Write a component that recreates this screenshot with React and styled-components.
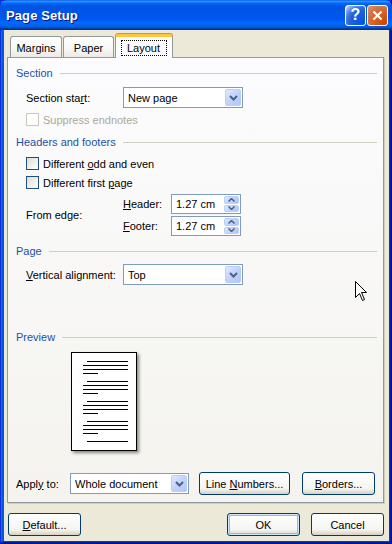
import React from 'react';
import styled, { createGlobalStyle } from 'styled-components';

const GlobalStyle = createGlobalStyle`
  html, body {
    margin: 0;
    padding: 0;
    background: #ECE9D8;
  }
  body {
    font-family: "Liberation Sans", Arial, sans-serif;
    font-size: 11px;
    color: #000;
  }
`;

const Window = styled.div`
  width: 392px;
  height: 544px;
  box-sizing: border-box;
  display: flex;
  flex-direction: column;
  background: #0855dd;
  box-shadow: inset -1px -1px #00138c, inset 1px 1px #0831d9, inset -2px -2px #001ea0,
    inset 2px 2px #166aee, inset -3px -3px #003bda, inset 3px 3px #0855dd;
  padding: 0 3px 3px 4px;
`;

const TitleBar = styled.div`
  height: 30px;
  margin: 0 -3px 0 -4px;
  padding: 0 4px 0 6px;
  display: flex;
  align-items: center;
  background: linear-gradient(
    to bottom,
    #0058ee 0%,
    #3593ff 4%,
    #288eff 6%,
    #127dff 8%,
    #036ffc 10%,
    #0262ee 14%,
    #0057e5 20%,
    #0054e3 24%,
    #0055eb 56%,
    #005bf5 66%,
    #026afe 76%,
    #0062ef 86%,
    #0052d6 92%,
    #0040ab 94%,
    #003092 100%
  );
  border-radius: 7px 7px 0 0;
`;

const Title = styled.div`
  flex: 1;
  color: #fff;
  font-weight: bold;
  font-size: 13px;
  letter-spacing: 0.1px;
  text-shadow: 1px 1px #0f1089;
`;

const CaptionButton = styled.div`
  width: 21px;
  height: 21px;
  box-sizing: border-box;
  border: 1px solid #fff;
  border-radius: 3px;
  margin-left: 1px;
  display: flex;
  align-items: center;
  justify-content: center;
  color: #fff;
  font-weight: bold;
  font-size: 16px;
  background: ${p =>
    p.close
      ? 'radial-gradient(circle at 90% 90%, #cc4600 0%, #dc6527 55%, #cd7546 70%, #e8916c 100%)'
      : 'radial-gradient(circle at 90% 90%, #0054e9 0%, #2263d5 55%, #4479e4 70%, #a3bbec 90%, #fff 100%)'};
`;

const Body = styled.div`
  flex: 1;
  background: #ECE9D8;
  padding: 4px 5px 4px 3px;
  display: flex;
  flex-direction: column;
`;

const TabStrip = styled.div`
  height: 23px;
  display: flex;
  align-items: flex-end;
  padding-left: 3px;
  position: relative;
  z-index: 1;
`;

const Tab = styled.div`
  width: ${p => p.w}px;
  height: ${p => (p.active ? 24 : 21)}px;
  margin-right: 1px;
  margin-bottom: ${p => (p.active ? -1 : 0)}px;
  box-sizing: border-box;
  border: 1px solid #919b9c;
  border-bottom: none;
  border-top: ${p => (p.active ? '3px solid #ffc83c' : '1px solid #919b9c')};
  border-radius: 3px 3px 0 0;
  background: ${p => (p.active ? '#fcfcfe' : 'linear-gradient(#ffffff, #f7f7f4 60%, #ecebe6)')};
  box-shadow: ${p => (p.active ? '0 -1px 0 #e68b2c' : 'none')};
  display: flex;
  align-items: center;
  justify-content: center;
  padding-top: ${p => (p.active ? 0 : 1)}px;
`;

const FocusBox = styled.span`
  outline: 1px dotted #000;
  padding: 1px 6px 1px 5px;
  line-height: 12px;
`;

const Panel = styled.div`
  height: 446px;
  box-sizing: border-box;
  border: 1px solid #919b9c;
  background: linear-gradient(#fcfcfe, #f4f3ee);
  box-shadow: 1px 1px 0 #d0cebf;
  padding: 0 6px 7px 8px;
  display: flex;
  flex-direction: column;
  position: relative;
`;

const GroupHeader = styled.div`
  height: 14px;
  margin-top: ${p => p.mt}px;
  display: flex;
  align-items: center;
  color: #1d4fa6;
  &::after {
    content: '';
    flex: 1;
    height: 1px;
    margin-left: 7px;
    background: #d0d0bf;
  }
`;

const Row = styled.div`
  display: flex;
  align-items: center;
  height: ${p => p.h || 21}px;
  margin-top: ${p => p.mt}px;
  padding-left: ${p => (p.flush ? 0 : 10)}px;
  color: ${p => (p.disabled ? '#aca899' : '#000')};
`;

const Label = styled.span`
  width: ${p => p.w}px;
  flex-shrink: 0;
  white-space: pre;
`;

const CheckText = styled.span`
  white-space: pre;
`;

const Combo = styled.div`
  width: ${p => p.w}px;
  height: 21px;
  box-sizing: border-box;
  border: 1px solid #7f9db9;
  background: #fff;
  padding: 1px;
  display: flex;
`;

const ComboText = styled.span`
  flex: 1;
  padding-left: 3px;
  display: flex;
  align-items: center;
`;

const ArrowButton = styled.span`
  width: 16px;
  border-radius: 2px;
  box-sizing: border-box;
  border: 1px solid #b9cef9;
  background: linear-gradient(135deg, #dfe9fe, #c1d3fb 50%, #b0c6f6);
  display: flex;
  align-items: center;
  justify-content: center;
`;

const CheckBox = styled.span`
  width: 13px;
  height: 13px;
  box-sizing: border-box;
  border: 1px solid ${p => (p.disabled ? '#cac8bb' : '#1c5180')};
  background: ${p => (p.disabled ? '#fff' : 'linear-gradient(135deg, #dcdcd7, #fff)')};
  margin-right: 4px;
  flex-shrink: 0;
`;

const EdgeBlock = styled.div`
  display: flex;
  align-items: center;
  margin-top: 5px;
  padding-left: 10px;
`;

const SpinColumn = styled.div`
  display: flex;
  flex-direction: column;
  gap: 2px;
`;

const SpinRow = styled.div`
  display: flex;
  align-items: center;
  height: 20px;
`;

const SpinBox = styled.div`
  width: 70px;
  height: 20px;
  box-sizing: border-box;
  border: 1px solid #7f9db9;
  background: #fff;
  padding: 1px;
  display: flex;
`;

const SpinButtons = styled.div`
  width: 15px;
  display: flex;
  flex-direction: column;
  gap: 1px;
`;

const SpinHalf = styled(ArrowButton)`
  width: 15px;
  flex: 1;
`;

const PreviewPage = styled.div`
  width: 66px;
  height: 99px;
  box-sizing: border-box;
  margin-top: 8px;
  margin-left: 55px;
  border: 1px solid #000;
  background: #fff;
  box-shadow: 2px 2px 3px rgba(0, 0, 0, 0.45);
`;

const ApplyRow = styled(Row)`
  margin-top: auto;
  height: 23px;
`;

const Button = styled.button`
  width: ${p => p.w}px;
  height: 23px;
  box-sizing: border-box;
  margin-left: ${p => p.ml || 0}px;
  border: 1px solid #003c74;
  border-radius: 3px;
  background: linear-gradient(#ffffff, #f4f4f0 75%, #e3dfd5 90%, #d6d0c5);
  box-shadow: ${p => (p.primary ? 'inset 0 0 0 1px #cee7ff, inset 0 0 0 2px #98b8ea' : 'none')};
  font: inherit;
  color: #000;
  padding: 0;
`;

const ButtonRow = styled.div`
  display: flex;
  margin-top: 10px;
  padding-left: 1px;
`;

const Spacer = styled.div`
  flex: 1;
`;

const Cursor = styled.svg`
  position: absolute;
  left: 347px;
  top: 223px;
`;

const Chevron = () => (
  <svg width="9" height="6" viewBox="0 0 9 6">
    <path d="M1 1 L4.5 4.5 L8 1" fill="none" stroke="#4d6185" strokeWidth="2" />
  </svg>
);

const SmallArrow = ({ up }) => (
  <svg width="7" height="4" viewBox="0 0 7 4">
    <path
      d={up ? 'M0.5 3.5 L3.5 0.5 L6.5 3.5' : 'M0.5 0.5 L3.5 3.5 L6.5 0.5'}
      fill="none"
      stroke="#4d6185"
      strokeWidth="1.5"
    />
  </svg>
);

const DropDown = ({ w, value }) => (
  <Combo w={w}>
    <ComboText>{value}</ComboText>
    <ArrowButton>
      <Chevron />
    </ArrowButton>
  </Combo>
);

const Spinner = ({ value }) => (
  <SpinBox>
    <ComboText>{value}</ComboText>
    <SpinButtons>
      <SpinHalf>
        <SmallArrow up />
      </SpinHalf>
      <SpinHalf>
        <SmallArrow />
      </SpinHalf>
    </SpinButtons>
  </SpinBox>
);

const previewLines = [];
for (let p = 0; p < 5; p++) {
  const y = 8 + p * 20;
  previewLines.push({ x: 15, y, w: 41 });
  if (p < 4) {
    previewLines.push({ x: 11, y: y + 4, w: 45 });
    previewLines.push({ x: 11, y: y + 8, w: 45 });
    previewLines.push({ x: 11, y: y + 12, w: 15 });
  }
}

export default function App() {
  return (
    <>
      <GlobalStyle />
      <Window>
        <TitleBar>
          <Title>Page Setup</Title>
          <CaptionButton>?</CaptionButton>
          <CaptionButton close>
            <svg width="11" height="11" viewBox="0 0 11 11">
              <path d="M1.5 1.5 L9.5 9.5 M9.5 1.5 L1.5 9.5" stroke="#fff" strokeWidth="2.2" />
            </svg>
          </CaptionButton>
        </TitleBar>
        <Body>
          <TabStrip>
            <Tab w={52}>Margins</Tab>
            <Tab w={51}>Paper</Tab>
            <Tab w={58} active>
              <FocusBox>Layout</FocusBox>
            </Tab>
          </TabStrip>
          <Panel>
            <GroupHeader mt={8}>Section</GroupHeader>
            <Row mt={7}>
              <Label w={97}>
                Section sta<u>r</u>t:
              </Label>
              <DropDown w={120} value="New page" />
            </Row>
            <Row mt={5} h={13} disabled>
              <CheckBox disabled />
              <CheckText>Suppress endnotes</CheckText>
            </Row>

            <GroupHeader mt={9}>Headers and footers</GroupHeader>
            <Row mt={8} h={13}>
              <CheckBox />
              <CheckText>
                Different <u>o</u>dd and even
              </CheckText>
            </Row>
            <Row mt={6} h={13}>
              <CheckBox />
              <CheckText>
                Different first <u>p</u>age
              </CheckText>
            </Row>
            <EdgeBlock>
              <Label w={97}>From edge:</Label>
              <SpinColumn>
                <SpinRow>
                  <Label w={48}>
                    <u>H</u>eader:
                  </Label>
                  <Spinner value="1.27 cm" />
                </SpinRow>
                <SpinRow>
                  <Label w={48}>
                    <u>F</u>ooter:
                  </Label>
                  <Spinner value="1.27 cm" />
                </SpinRow>
              </SpinColumn>
            </EdgeBlock>

            <GroupHeader mt={8}>Page</GroupHeader>
            <Row mt={6}>
              <Label w={97}>
                <u>V</u>ertical alignment:
              </Label>
              <DropDown w={120} value="Top" />
            </Row>

            <GroupHeader mt={45}>Preview</GroupHeader>
            <PreviewPage>
              <svg width="64" height="97" viewBox="0 0 64 97">
                {previewLines.map((l, i) => (
                  <rect key={i} x={l.x} y={l.y} width={l.w} height="1" fill="#000" />
                ))}
              </svg>
            </PreviewPage>

            <ApplyRow flush>
              <Label w={54}>
                Appl<u>y</u> to:
              </Label>
              <DropDown w={119} value="Whole document" />
              <Button w={91} ml={10}>
                Line <u>N</u>umbers...
              </Button>
              <Button w={73} ml={12}>
                <u>B</u>orders...
              </Button>
            </ApplyRow>

            <Cursor width="13" height="21" viewBox="0 0 13 21">
              <path
                d="M0.5 0.5 L0.5 16.5 L4.5 12.5 L7.5 19.5 L9.5 18.5 L6.5 11.5 L11.5 11.5 Z"
                fill="#fff"
                stroke="#000"
                strokeWidth="1"
              />
            </Cursor>
          </Panel>
          <ButtonRow>
            <Button w={73}>
              <u>D</u>efault...
            </Button>
            <Spacer />
            <Button w={73} primary>
              OK
            </Button>
            <Button w={73} ml={11}>
              Cancel
            </Button>
          </ButtonRow>
        </Body>
      </Window>
    </>
  );
}
